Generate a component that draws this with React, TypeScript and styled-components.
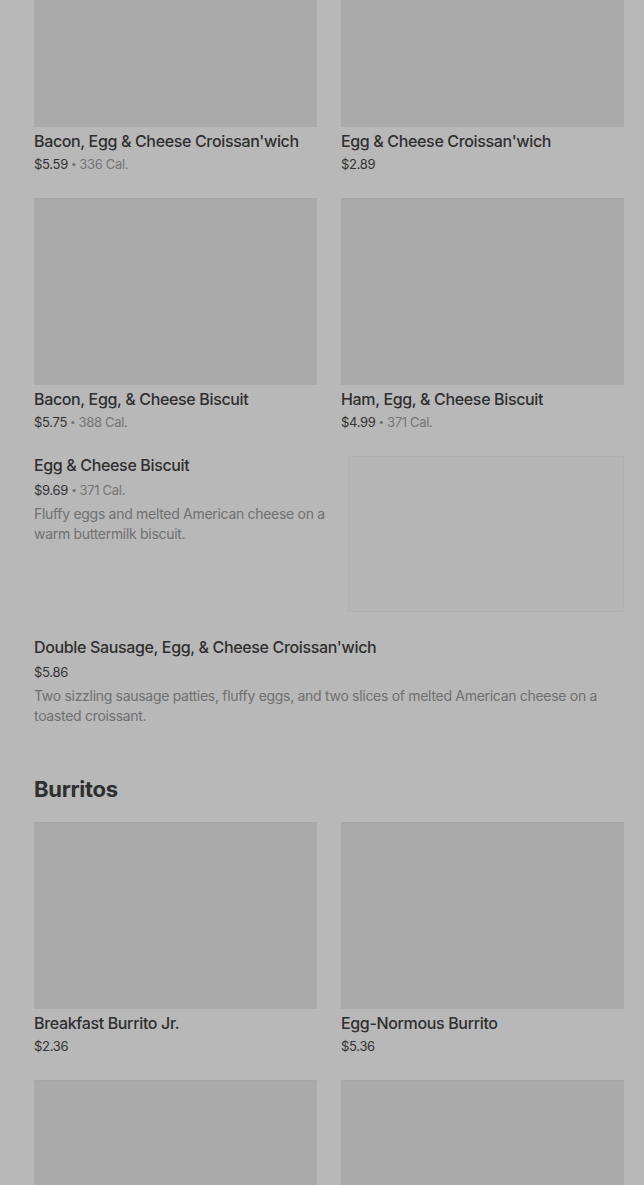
import React from "react";
import styled, { createGlobalStyle } from "styled-components";

const GlobalStyle = createGlobalStyle`
    html, body {
        margin: 0;
        padding: 0;
        background: #b8b8b8;
        overflow: hidden;
    }
    body {
        font-family: Inter, "Noto Sans", sans-serif;
    }
`;

const Page = styled.div`
    width: 644px;
    height: 1185px;
    overflow: hidden;
    background: #b8b8b8;
`;

const Content = styled.div`
    padding: 0 20px 0 34px;
    margin-top: -60px;
`;

const Grid = styled.div`
    display: grid;
    grid-template-columns: 1fr 1fr;
    column-gap: 24px;
    row-gap: 25px;
`;

const Card = styled.div`
    display: flex;
    flex-direction: column;
`;

const Thumb = styled.div`
    height: 187px;
    background: #aaaaaa;
    box-shadow: inset 0 1px 0 #a6a6a6;
`;

const Title = styled.div<{ $top?: number }>`
    margin-top: ${(p) => p.$top ?? 4}px;
    font-size: 16px;
    line-height: 20px;
    font-weight: 500;
    color: #2f2f2f;
    letter-spacing: -0.35px;
`;

const Meta = styled.div<{ $top?: number }>`
    margin-top: ${(p) => p.$top ?? 4}px;
    height: 18px;
    font-size: 13px;
    line-height: 18px;
    color: #333333;
    letter-spacing: -0.3px;
`;

const Cal = styled.span`
    color: #757575;
`;

const Dot = styled.span`
    display: inline-block;
    font-size: 10px;
    line-height: 0;
    vertical-align: 2px;
    padding: 0 3px;
    color: #757575;
`;

const Desc = styled.div`
    margin-top: 5px;
    font-size: 14px;
    line-height: 20px;
    color: #707070;
    letter-spacing: -0.3px;
`;

const Row = styled.div`
    display: flex;
    justify-content: space-between;
    margin-top: 24px;
`;

const RowText = styled.div`
    width: 300px;
`;

const RowImage = styled.div`
    width: 276px;
    height: 156px;
    margin-top: 1px;
    background: #b5b5b5;
    box-shadow: inset 0 0 0 1px #b0b0b0;
`;

const Wide = styled.div`
    margin-top: 25px;
`;

const Section = styled.h2`
    margin: 49px 0 19px;
    font-size: 22px;
    line-height: 28px;
    font-weight: 700;
    color: #2f2f2f;
    letter-spacing: -0.3px;
`;

type Item = { name: string; price: string; cal?: string };

const breakfast: Item[] = [
    { name: "Bacon, Egg & Cheese Croissan'wich", price: "$5.59", cal: "336 Cal." },
    { name: "Egg & Cheese Croissan'wich", price: "$2.89" },
    { name: "Bacon, Egg, & Cheese Biscuit", price: "$5.75", cal: "388 Cal." },
    { name: "Ham, Egg, & Cheese Biscuit", price: "$4.99", cal: "371 Cal." },
];

const burritos: Item[] = [
    { name: "Breakfast Burrito Jr.", price: "$2.36" },
    { name: "Egg-Normous Burrito", price: "$5.36" },
    { name: "", price: "" },
    { name: "", price: "" },
];

function Price({ item }: { item: Item }) {
    return (
        <>
            {item.price}
            {item.cal && (
                <>
                    <Dot>•</Dot>
                    <Cal>{item.cal}</Cal>
                </>
            )}
        </>
    );
}

function ItemCard({ item }: { item: Item }) {
    return (
        <Card>
            <Thumb />
            {item.name && <Title>{item.name}</Title>}
            {item.price && (
                <Meta>
                    <Price item={item} />
                </Meta>
            )}
        </Card>
    );
}

export default function App() {
    return (
        <Page>
            <GlobalStyle />
            <Content>
                <Grid>
                    {breakfast.map((it) => (
                        <ItemCard key={it.name} item={it} />
                    ))}
                </Grid>

                <Row>
                    <RowText>
                        <Title $top={0}>Egg &amp; Cheese Biscuit</Title>
                        <Meta $top={6}>
                            <Price item={{ name: "", price: "$9.69", cal: "371 Cal." }} />
                        </Meta>
                        <Desc>
                            Fluffy eggs and melted American cheese on a warm
                            buttermilk biscuit.
                        </Desc>
                    </RowText>
                    <RowImage />
                </Row>

                <Wide>
                    <Title $top={0}>
                        Double Sausage, Egg, &amp; Cheese Croissan'wich
                    </Title>
                    <Meta $top={6}>$5.86</Meta>
                    <Desc>
                        Two sizzling sausage patties, fluffy eggs, and two
                        slices of melted American cheese on a toasted
                        croissant.
                    </Desc>
                </Wide>

                <Section>Burritos</Section>
                <Grid>
                    {burritos.map((it, i) => (
                        <ItemCard key={i} item={it} />
                    ))}
                </Grid>
            </Content>
        </Page>
    );
}
